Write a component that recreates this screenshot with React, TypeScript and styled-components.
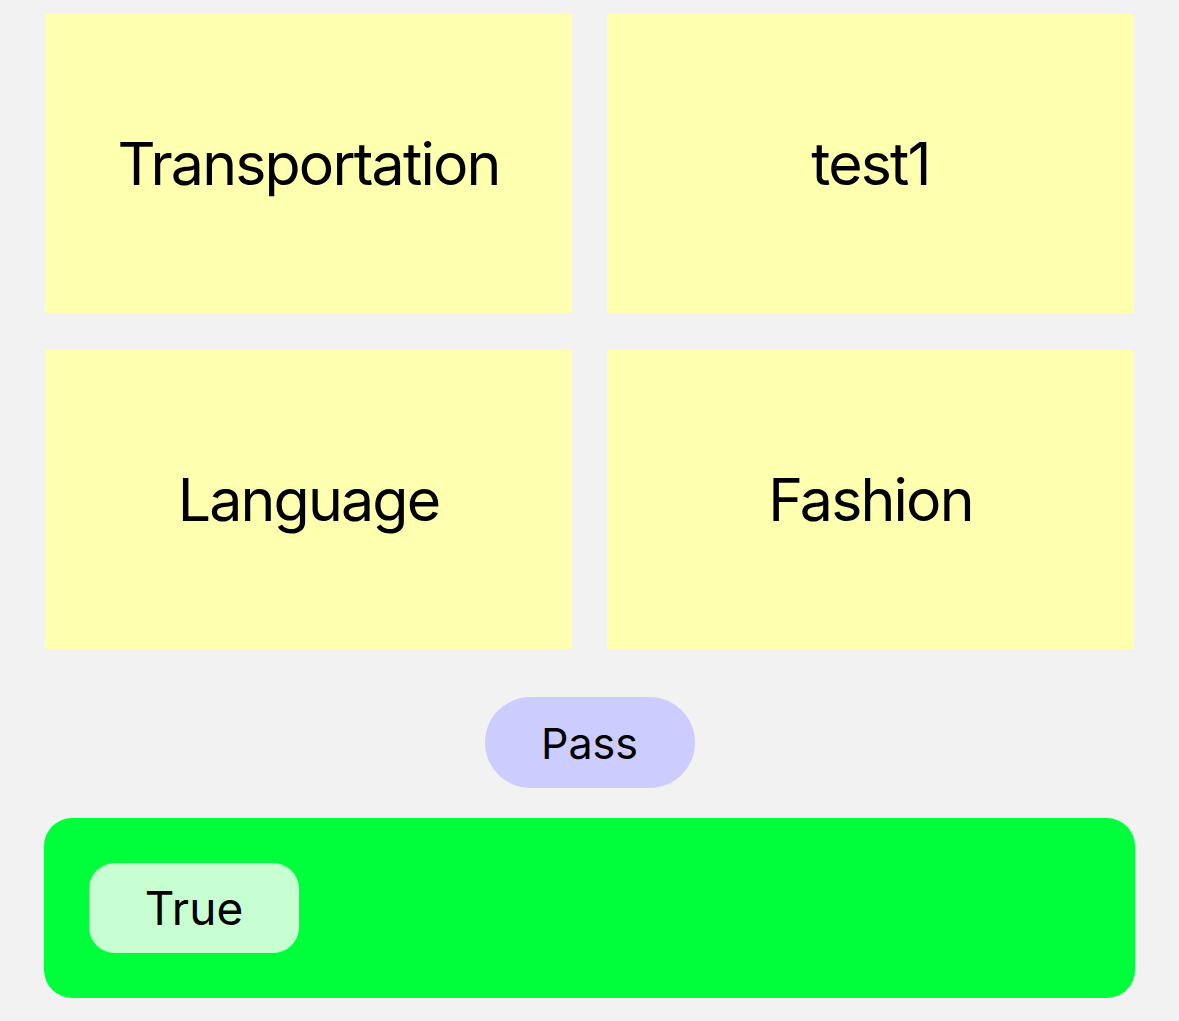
import * as React from 'react';
import styled, { createGlobalStyle } from "styled-components";

const GlobalStyle = createGlobalStyle`
    html, body {
        margin: 0;
        padding: 0;
        background: #f2f2f2;
        font-family: Inter, "Noto Sans", sans-serif;
        color: #000;
    }
`;

const topics = ["Transportation", "test1", "Language", "Fashion"];

const App = () => {
    const [passed, setPassed] = React.useState(false);

    return (
        <>
            <GlobalStyle />
            <Page>
                <Grid>
                    {topics.map(t => (
                        <Card key={t}>{t}</Card>
                    ))}
                </Grid>
                <PassRow>
                    <PassButton onClick={() => setPassed(!passed)}>Pass</PassButton>
                </PassRow>
                <ResultPanel>
                    <ResultBadge>True</ResultBadge>
                </ResultPanel>
            </Page>
        </>
    );
};

const Page = styled.div`
    display: flex;
    flex-direction: column;
    padding: 14px 45px 0 45px;
`;

const Grid = styled.div`
    display: grid;
    grid-template-columns: 1fr 1fr;
    grid-auto-rows: 299px;
    column-gap: 35px;
    row-gap: 37px;
`;

const Card = styled.div`
    display: flex;
    align-items: center;
    justify-content: center;
    background: #ffffb0;
    font-size: 59px;
    font-weight: 400;
    letter-spacing: -1.8px;
`;

const PassRow = styled.div`
    display: flex;
    justify-content: center;
    margin-top: 48px;
`;

const PassButton = styled.button`
    width: 210px;
    height: 91px;
    border: none;
    border-radius: 46px;
    background: #ccccff;
    font-family: Inter, "Noto Sans", sans-serif;
    font-size: 43px;
    color: #000;
    padding: 0;
    cursor: pointer;
`;

const ResultPanel = styled.div`
    display: flex;
    align-items: center;
    margin: 30px -1px 0 -1px;
    height: 180px;
    padding: 0 45px;
    border-radius: 28px;
    background: #00ff3b;
`;

const ResultBadge = styled.div`
    display: flex;
    align-items: center;
    justify-content: center;
    width: 210px;
    height: 90px;
    border-radius: 26px;
    background: #c8ffd2;
    font-size: 46px;
`;

export default App;
